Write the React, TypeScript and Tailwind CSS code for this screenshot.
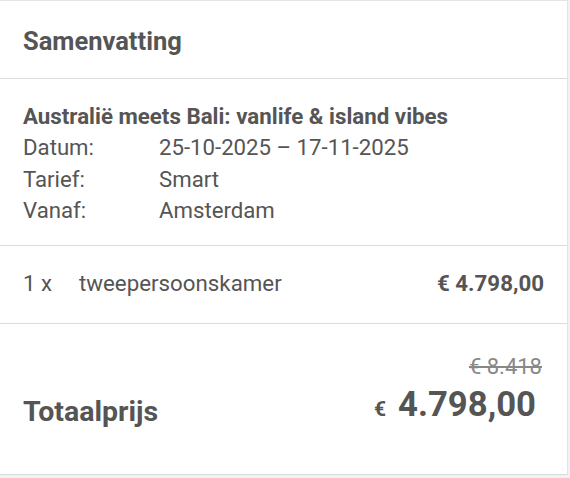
export default function App() {
  return (
    <div className="min-h-[478px] bg-[#f2f2f2]" style={{ fontFamily: 'Roboto, "Liberation Sans", sans-serif' }}>
      <div className="w-[568px] border-t border-r border-[#e4e4e4] bg-white text-[#555]">
        <div className="flex h-[78px] items-center border-b border-[#dcdcdc] px-[23px] pt-[4px]">
          <h2 className="text-[25.5px] font-bold">Samenvatting</h2>
        </div>

        <div className="border-b border-[#dcdcdc] px-[23px] pt-[22px] pb-[18px]">
          <div className="text-[22.3px] leading-[31px] font-bold">Australië meets Bali: vanlife &amp; island vibes</div>
          <div className="grid grid-cols-[136px_1fr] text-[22.2px] leading-[31.5px]">
            <span>Datum:</span>
            <span>25-10-2025 – 17-11-2025</span>
            <span>Tarief:</span>
            <span>Smart</span>
            <span>Vanaf:</span>
            <span>Amsterdam</span>
          </div>
        </div>

        <div className="flex h-[78px] items-center border-b border-[#dcdcdc] px-[23px] text-[22.3px]">
          <span className="w-[56px]">1 x</span>
          <span className="flex-1">tweepersoonskamer</span>
          <span className="font-bold">€ 4.798,00</span>
        </div>

        <div className="flex h-[151px] items-start justify-between border-b border-[#dcdcdc] pl-[23px] pr-[25px] pt-[28px]">
          <div className="pt-[39px] text-[28.5px] font-bold">Totaalprijs</div>
          <div className="flex flex-col items-end">
            <span className="text-[22px] leading-[30px] text-[#888] line-through">€ 8.418</span>
            <div className="mr-[6px] flex items-baseline gap-[12px] font-bold">
              <span className="text-[21px]">€</span>
              <span className="text-[34.7px] leading-[44px]">4.798,00</span>
            </div>
          </div>
        </div>
      </div>
    </div>
  )
}
